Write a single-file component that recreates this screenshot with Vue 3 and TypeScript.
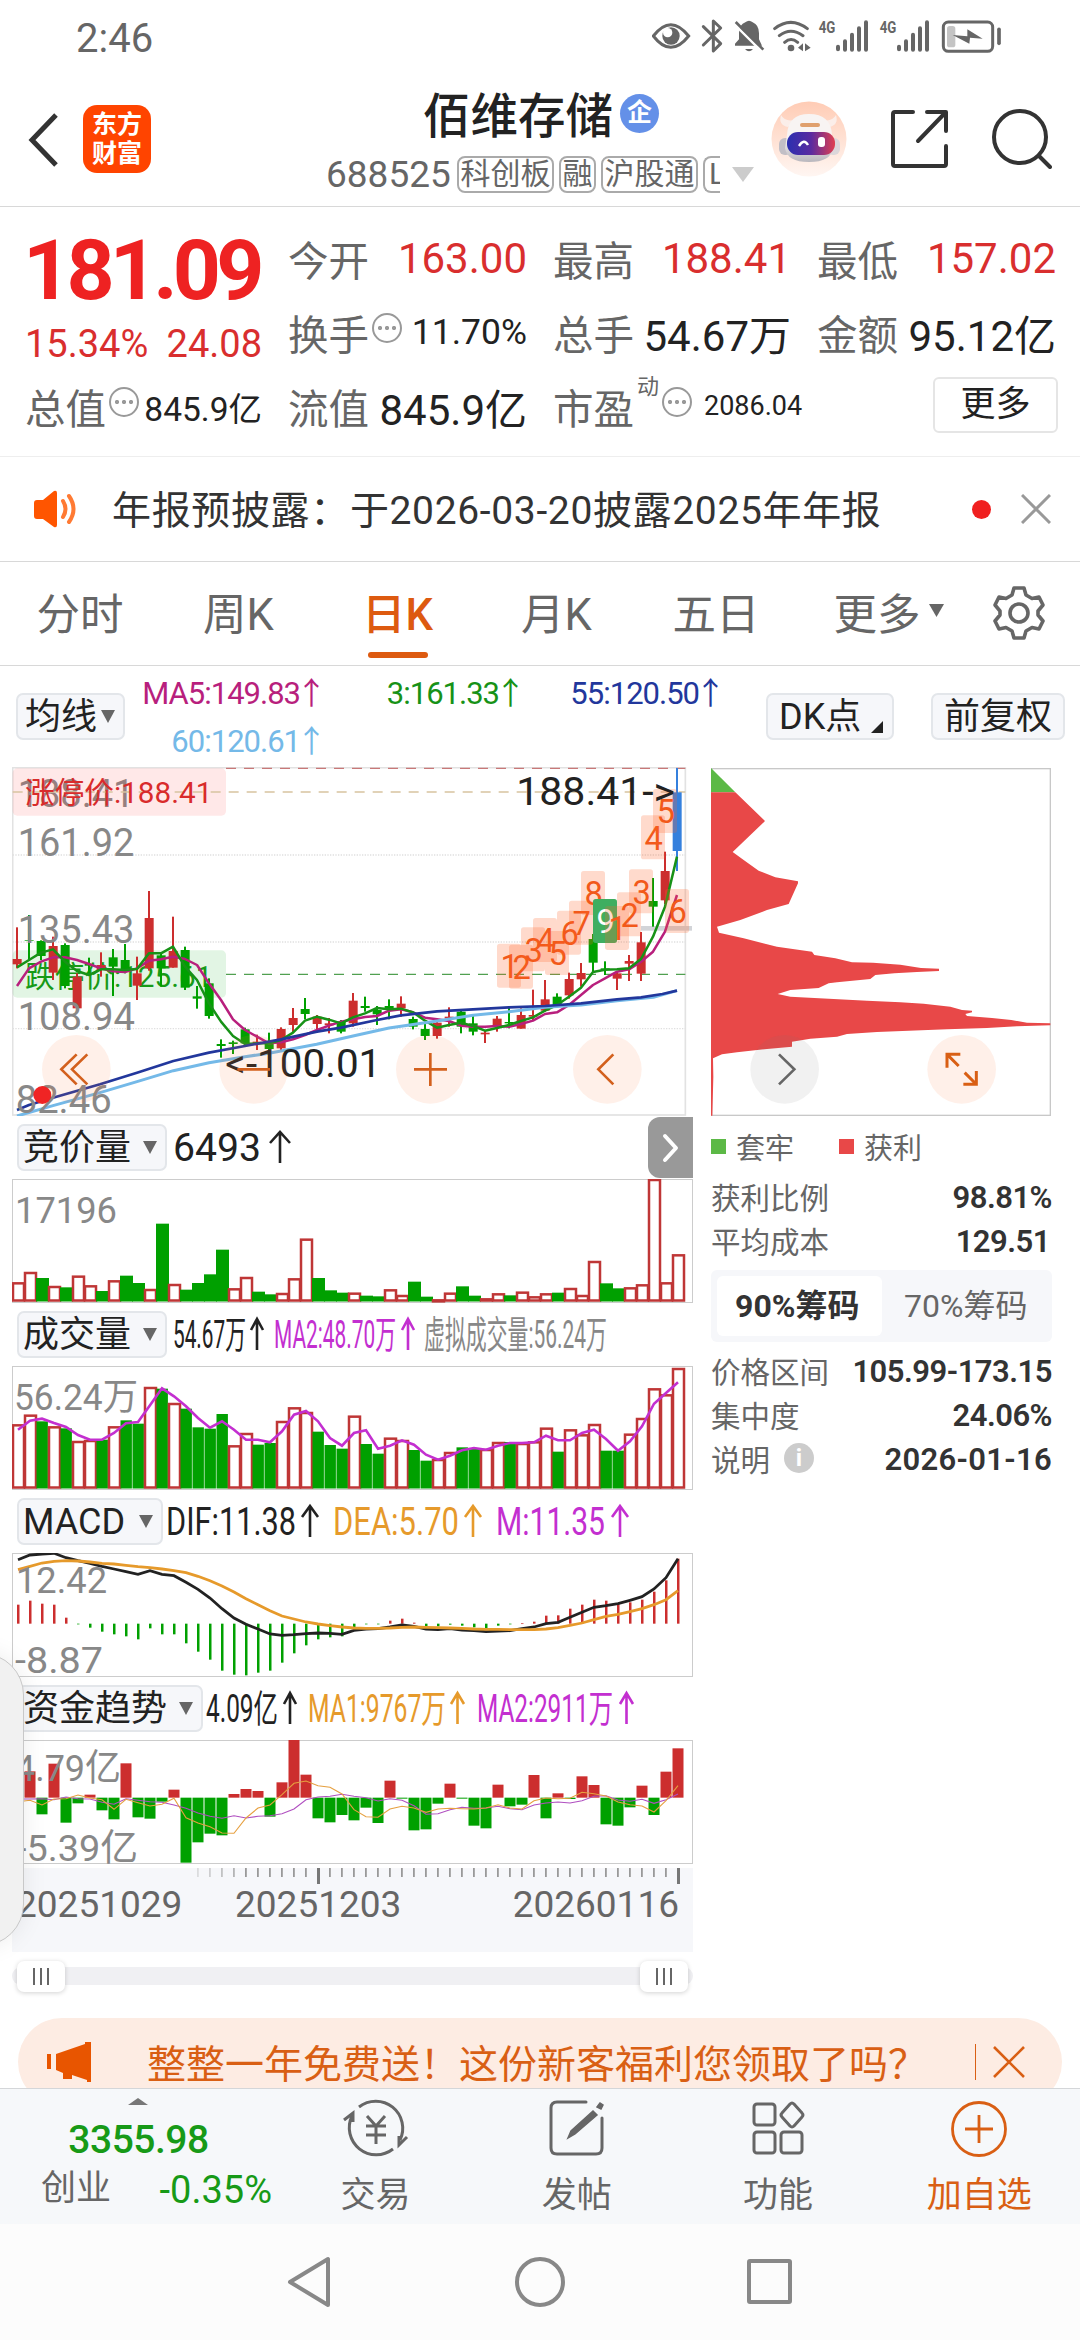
<script setup lang="ts">
import { computed, ref } from 'vue'

type Candle = [high: number, top: number, bottom: number, low: number, kind: string]

interface Reading {
    text: string
    x: number
    w: number
    color: string
    arrow?: number
    arrowWidth?: number
}

interface Panel {
    id: string
    name: string
    button: number
    start: number
    readings: Reading[]
}

const GREEN = '#00a000'
const RED = '#cc2e2e'

const tabs = ['分时', '周K', '日K', '月K', '五日']
const activeTab = ref('日K')
const chipRange = ref('90%筹码')

// Candles: high, body top, body bottom, low in chart units (3 per pixel)
const candles: Candle[] = [
    [502, 597, 613, 625, 'r'], [465, 541, 543, 603, 'g'], [541, 543, 588, 600, 'g'], [530, 558, 638, 660, 'r'],
    [550, 555, 678, 685, 'g'], [640, 650, 745, 748, 'r'], [593, 612, 617, 640, 'g'], [577, 615, 630, 650, 'r'],
    [567, 592, 620, 708, 'g'], [552, 600, 628, 640, 'g'], [590, 640, 677, 720, 'r'], [393, 474, 625, 632, 'r'],
    [580, 586, 625, 680, 'g'], [470, 573, 623, 623, 'r'], [560, 570, 683, 690, 'g'], [678, 709, 716, 746, 'g'],
    [655, 670, 768, 776, 'g'], [838, 852, 858, 893, 'g'], [842, 847, 852, 882, 'g'], [803, 808, 850, 853, 'g'],
    [824, 845, 850, 870, 'r'], [818, 845, 867, 872, 'g'], [802, 807, 865, 875, 'r'], [744, 774, 795, 818, 'r'],
    [714, 747, 762, 778, 'g'], [765, 770, 792, 818, 'r'], [774, 790, 796, 820, 'r'], [780, 785, 815, 820, 'g'],
    [699, 722, 790, 800, 'r'], [710, 738, 744, 755, 'g'], [738, 750, 763, 795, 'g'], [718, 738, 744, 778, 'g'],
    [709, 731, 745, 770, 'r'], [770, 777, 800, 808, 'g'], [790, 807, 828, 840, 'g'], [780, 788, 828, 836, 'r'],
    [742, 770, 776, 800, 'r'], [750, 755, 800, 820, 'g'], [763, 790, 815, 826, 'g'], [812, 818, 823, 849, 'r'],
    [768, 776, 800, 815, 'r'], [738, 786, 790, 805, 'g'], [745, 765, 806, 806, 'r'], [689, 765, 770, 780, 'r'],
    [660, 718, 752, 755, 'r'], [700, 710, 735, 742, 'g'], [638, 657, 706, 716, 'r'], [609, 639, 658, 680, 'r'],
    [522, 537, 608, 635, 'g'], [604, 625, 630, 645, 'g'], [635, 640, 656, 690, 'r'], [585, 603, 611, 663, 'r'],
    [516, 547, 641, 663, 'r'], [354, 423, 440, 500, 'g'], [275, 333, 421, 432, 'r'], [24, 97, 273, 333, 'b'],
]

const ma3 = [622, 600, 578, 568, 605, 633, 645, 628, 628, 630, 627, 580, 580, 560, 620, 660, 730, 785, 828, 852, 850, 850, 840, 818, 782, 770, 779, 790, 772, 760, 744, 748, 746, 757, 782, 803, 795, 788, 798, 812, 804, 795, 783, 772, 752, 735, 710, 683, 636, 629, 628, 625, 597, 530, 440, 290]
const ma5 = [678, 625, 605, 592, 592, 600, 612, 625, 634, 636, 625, 602, 598, 590, 597, 615, 670, 720, 778, 810, 830, 850, 847, 838, 825, 810, 797, 785, 778, 771, 768, 752, 748, 757, 773, 778, 783, 797, 800, 800, 798, 800, 792, 782, 762, 757, 735, 705, 675, 655, 635, 628, 605, 575, 515, 405]

const kx = (i: number) => 51 + i * 36
const kLine = (ys: number[]) => ys.map((y, i) => `${kx(i)},${y}`).join(' ')

// Sequence counter labels on top of the candles
const marks = [
    ['1', 1491, 551], ['2', 1527, 554], ['3', 1563, 502], ['4', 1599, 474], ['5', 1635, 513],
    ['6', 1671, 452], ['7', 1707, 422], ['8', 1743, 333], ['9', 1779, 417], ['1', 1815, 438],
    ['2', 1851, 397], ['3', 1887, 328], ['4', 1923, 166], ['5', 1959, 87], ['6', 1995, 387],
] as [string, number, number][]

// Bar tops per day (3 units per pixel) and direction per day
const auctionTops = [310, 279, 297, 321, 325, 290, 319, 336, 304, 290, 312, 330, 134, 315, 332, 312, 286, 212, 328, 294, 338, 346, 342, 298, 179, 297, 334, 341, 341, 350, 352, 331, 348, 308, 353, 361, 341, 322, 350, 358, 343, 349, 338, 352, 343, 341, 327, 348, 246, 313, 328, 325, 316, 0, 310, 226]
const auctionKinds = 'rrgrgrrgrggrgrggggrrggrrrgggrggrrggrrggrrgrrrgrrrggrrrrr'
const volumeTops = [175, 146, 166, 181, 187, 225, 222, 221, 181, 163, 173, 63, 68, 111, 128, 184, 188, 144, 238, 201, 236, 231, 165, 124, 138, 197, 237, 248, 149, 234, 263, 215, 222, 252, 284, 279, 258, 244, 246, 249, 228, 228, 231, 226, 185, 257, 190, 205, 174, 254, 254, 203, 156, 67, 85, 6]
const volumeKinds = 'rrgrgrrgrggrgrggggrrggrrrgggrggrrggrrggrrgrrrgrrrggrrrrr'
const volumeMa = [191, 164, 158, 171, 183, 207, 221, 221, 201, 172, 168, 118, 67, 91, 121, 156, 185, 166, 191, 221, 221, 229, 196, 146, 135, 166, 216, 239, 201, 193, 248, 239, 223, 236, 266, 281, 269, 253, 246, 251, 239, 231, 231, 229, 209, 223, 223, 201, 191, 219, 254, 226, 181, 113, 81, 49]

const macdBars = [345, 333, 342, 345, 384, 404, 414, 426, 434, 440, 449, 416, 434, 434, 461, 486, 510, 543, 555, 557, 549, 543, 519, 491, 467, 449, 443, 440, 415, 404, 403, 393, 387, 399, 410, 410, 405, 408, 413, 416, 408, 404, 401, 396, 378, 377, 357, 345, 330, 333, 343, 338, 330, 306, 272, 207]
const dif = [210, 196, 193, 191, 204, 213, 221, 230, 238, 246, 254, 243, 254, 258, 278, 299, 325, 357, 385, 404, 418, 433, 437, 435, 432, 430, 431, 434, 422, 418, 417, 412, 406, 410, 418, 420, 417, 421, 423, 426, 424, 423, 417, 412, 402, 398, 383, 368, 353, 348, 342, 332, 321, 298, 264, 207]
const dea = [240, 230, 220, 215, 213, 214, 217, 221, 223, 227, 231, 234, 238, 243, 249, 260, 273, 289, 307, 327, 345, 363, 379, 388, 397, 403, 408, 412, 415, 416, 416, 415, 413, 412, 413, 414, 415, 416, 418, 419, 419, 420, 420, 420, 418, 414, 407, 400, 390, 380, 374, 366, 357, 345, 330, 303]

const flowEnds = [330, 275, 404, 252, 429, 371, 345, 392, 419, 251, 413, 417, 366, 330, 549, 488, 462, 467, 343, 328, 334, 411, 308, 181, 285, 416, 428, 406, 422, 384, 430, 303, 357, 452, 449, 372, 312, 357, 438, 446, 315, 380, 375, 286, 416, 341, 358, 290, 316, 434, 438, 383, 318, 406, 276, 206]
const flowMa1 = [366, 362, 376, 358, 357, 346, 355, 360, 389, 359, 369, 379, 374, 356, 414, 430, 441, 460, 461, 415, 385, 376, 345, 311, 304, 318, 323, 343, 390, 411, 413, 388, 380, 385, 398, 388, 386, 387, 388, 385, 375, 385, 388, 363, 355, 357, 356, 338, 342, 349, 367, 375, 379, 397, 363, 318]
const flowMa2 = [358, 358, 357, 360, 352, 357, 358, 368, 374, 357, 362, 366, 368, 376, 386, 400, 410, 416, 408, 415, 410, 408, 402, 388, 360, 352, 350, 344, 350, 354, 364, 357, 362, 378, 404, 402, 390, 383, 386, 385, 380, 387, 390, 376, 370, 367, 370, 363, 350, 348, 361, 365, 359, 371, 360, 343]

const px = (i: number) => 6 + i * 12
const line = (ys: number[], base: number) =>
    ys.map((y, i) => `${px(i)},${((y - base) / 3).toFixed(1)}`).join(' ')

const bars = (tops: number[], kinds: string) =>
    tops.map((t, i) => ({ x: px(i), y: t / 3, h: 122.5 - t / 3, up: kinds[i] === 'r' }))

const auctionBars = computed(() => bars(auctionTops, auctionKinds))
const volumeBars = computed(() => bars(volumeTops, volumeKinds))

// Signed bars growing up or down from a zero line
const signed = (ends: number[], base: number, zero: number) =>
    ends.map((e, i) => ({
        x: px(i),
        y: (Math.min(e, zero) - base) / 3,
        h: Math.max(0.7, Math.abs(e - zero) / 3),
        fill: e < zero ? RED : GREEN,
    }))

const macdSticks = computed(() => signed(macdBars, 190, 402))
const flowBars = computed(() => signed(flowEnds, 181, 354))

const ticks = Array.from({ length: 41 }, (_, k) => k + 15)

const panels: Panel[] = [
    {
        id: 'auction', name: '竞价量', button: 150, start: 167,
        readings: [{ text: '6493', x: 173, w: 88, color: '#222', arrow: 270, arrowWidth: 20 }],
    },
    {
        id: 'volume', name: '成交量', button: 150, start: 167,
        readings: [
            { text: '54.67万', x: 173, w: 73, color: '#222', arrow: 251, arrowWidth: 12 },
            { text: 'MA2:48.70万', x: 274, w: 122, color: '#c32fd0', arrow: 402, arrowWidth: 12 },
            { text: '虚拟成交量:56.24万', x: 424, w: 183, color: '#888' },
        ],
    },
    {
        id: 'macd', name: 'MACD', button: 146, start: 163,
        readings: [
            { text: 'DIF:11.38', x: 166, w: 130, color: '#222', arrow: 302, arrowWidth: 16 },
            { text: 'DEA:5.70', x: 333, w: 126, color: '#e69a2b', arrow: 465, arrowWidth: 16 },
            { text: 'M:11.35', x: 496, w: 109, color: '#c32fd0', arrow: 612, arrowWidth: 16 },
        ],
    },
    {
        id: 'flow', name: '资金趋势', button: 186, start: 203,
        readings: [
            { text: '4.09亿', x: 206, w: 72, color: '#222', arrow: 284, arrowWidth: 12 },
            { text: 'MA1:9767万', x: 308, w: 138, color: '#e69a2b', arrow: 451, arrowWidth: 13 },
            { text: 'MA2:2911万', x: 477, w: 136, color: '#c32fd0', arrow: 620, arrowWidth: 13 },
        ],
    },
]
</script>

<template>
    <main class="screen">
        <div class="status">
            <span class="clock">2:46</span>
            <svg class="status-icons" width="350" height="36" viewBox="36 24 1050 108" fill="none" stroke="#666">
                <path d="M40 78Q92 10 146 78Q92 146 40 78Z" stroke-width="9" />
                <circle cx="93" cy="78" r="26" fill="#666" stroke="none" />
                <circle cx="83" cy="68" r="14" fill="#fff" stroke="none" />
                <path d="M190 50L242 101L220 123V33L242 54L190 105" stroke-width="9" stroke-linejoin="round" stroke-linecap="round" />
                <path d="M285 107V101L297 88V68Q298 44 316 37Q327 28 338 37Q357 45 357 70V88L366 107Z" fill="#666" stroke="none" />
                <path d="M281 40L367 126" stroke="#fff" stroke-width="8" />
                <path d="M287 36L370 119" stroke-width="8" />
                <path d="M315 117H339Q327 131 315 117Z" fill="#666" stroke="none" />
                <path d="M404 56Q452 18 502 56M418 77Q452 50 489 77M434 97Q453 80 473 97" stroke-width="9" stroke-linecap="round" />
                <circle cx="453" cy="114" r="10" fill="#666" stroke="none" />
                <path d="M489 100V124L474 113ZM495 100V124L512 113Z" fill="#666" stroke="none" />
                <g fill="#666" stroke="none" class="net">
                    <text x="536" y="70" textLength="50" lengthAdjust="spacingAndGlyphs">4G</text>
                    <text x="719" y="70" textLength="50" lengthAdjust="spacingAndGlyphs">4G</text>
                </g>
                <path d="M594 110V118M615 94V119M636 74V119M657 55V119M678 37V119M777 110V118M798 94V119M819 74V119M840 55V119M861 37V119" stroke-width="12" stroke-linecap="round" />
                <rect x="910" y="36" width="148" height="88" rx="15" stroke-width="9" />
                <rect x="921" y="48" width="25" height="64" rx="8" fill="#c4c4c4" stroke="none" />
                <path d="M938 75L982 79V58L1028 86L990 83L988 101Z" fill="#666" stroke="none" />
                <path d="M1077 58V100" stroke-width="11" stroke-linecap="round" />
            </svg>
        </div>

        <header class="top">
            <div class="top-left">
                <svg width="32" height="54" viewBox="0 0 32 54" fill="none" stroke="#333" stroke-width="5"><path d="M29 2L5 27L29 52" /></svg>
                <div class="logo"><span>东方</span><span>财富</span></div>
            </div>
            <div class="stock">
                <div class="stock-name">佰维存储<span class="corp">企</span></div>
                <div class="stock-code">
                    <span class="code">688525</span>
                    <span class="tag">科创板</span>
                    <span class="tag">融</span>
                    <span class="tag">沪股通</span>
                    <span class="tag cut">L</span>
                    <svg class="drop" width="22" height="15" viewBox="0 0 22 15"><path d="M0 0H22L11 15Z" fill="#ccc" /></svg>
                </div>
            </div>
            <div class="top-right">
                <svg width="76" height="76" viewBox="0 0 76 76">
                    <defs>
                        <linearGradient id="halo" x1="0" y1="0" x2="0" y2="1"><stop offset="0" stop-color="#ffccb5" /><stop offset="1" stop-color="#fff6f2" /></linearGradient>
                        <linearGradient id="visor" x1="0" y1="0" x2="1" y2="0"><stop offset="0" stop-color="#2b2fb0" /><stop offset=".5" stop-color="#5a2ba0" /><stop offset="1" stop-color="#e04050" /></linearGradient>
                        <linearGradient id="shell" x1="0" y1="0" x2="0" y2="1"><stop offset=".5" stop-color="#f8f4f3" /><stop offset="1" stop-color="#b9b7bd" /></linearGradient>
                    </defs>
                    <circle cx="38" cy="38" r="37.5" fill="url(#halo)" />
                    <path d="M17 26Q7 24 10 14Q14 21 23 19ZM58 26Q68 24 65 14Q61 21 52 19Z" fill="#fbeee9" />
                    <rect x="8" y="37" width="13" height="17" rx="6" fill="#c2bfc6" />
                    <rect x="56" y="37" width="13" height="17" rx="6" fill="#dcd7da" />
                    <path d="M16 34Q17 13 38 13Q60 13 61 34L62 47Q60 61 38 61Q16 61 14 47Z" fill="url(#shell)" />
                    <rect x="29" y="22" width="20" height="4" rx="2" fill="#e0a06d" />
                    <rect x="16" y="31" width="48" height="23" rx="11" fill="url(#visor)" />
                    <path d="M28 45Q33 37 37 44" fill="none" stroke="#fff" stroke-width="2.4" />
                    <rect x="47" y="36" width="7" height="10" rx="3" fill="#fff" />
                </svg>
                <svg width="60" height="60" viewBox="0 0 60 60" fill="none" stroke="#333" stroke-width="4" stroke-linecap="round" stroke-linejoin="round">
                    <path d="M23 3H5Q3 3 3 5V55Q3 57 5 57H54Q56 57 56 55V37M37 3H56V22M55 4L28 32" />
                </svg>
                <svg width="60" height="60" viewBox="0 0 60 60" fill="none" stroke="#333" stroke-width="4" stroke-linecap="round">
                    <circle cx="28" cy="28" r="26" /><path d="M47 47L58 58" />
                </svg>
            </div>
        </header>

        <section class="quote">
            <div class="col first">
                <div class="price">181.09</div>
                <div class="cell change"><span>15.34%</span><span>24.08</span></div>
                <div class="cell"><label>总值</label><i class="dots"></i><b class="mid">845.9亿</b></div>
            </div>
            <div class="col">
                <div class="cell"><label>今开</label><b class="red">163.00</b></div>
                <div class="cell"><label>换手</label><i class="dots"></i><b class="mid">11.70%</b></div>
                <div class="cell"><label>流值</label><b>845.9亿</b></div>
            </div>
            <div class="col">
                <div class="cell"><label>最高</label><b class="red">188.41</b></div>
                <div class="cell"><label>总手</label><b>54.67万</b></div>
                <div class="cell"><label>市盈</label><sup>动</sup><i class="dots"></i><b class="small">2086.04</b></div>
            </div>
            <div class="col">
                <div class="cell"><label>最低</label><b class="red">157.02</b></div>
                <div class="cell"><label>金额</label><b>95.12亿</b></div>
                <div class="cell"><button class="more">更多</button></div>
            </div>
        </section>

        <section class="notice">
            <svg width="46" height="38" viewBox="0 0 46 38">
                <path d="M4 10H10L21 1Q24 0 24 3V35Q24 38 21 37L10 29H4Q1 29 1 26V13Q1 10 4 10Z" fill="#ff5500" />
                <path d="M30 11Q35 19 30 27M36 6Q45 19 36 32" fill="none" stroke="#ff7a33" stroke-width="4" stroke-linecap="round" />
            </svg>
            <p>年报预披露：于2026-03-20披露2025年年报</p>
            <i class="dot"></i>
            <svg width="30" height="30" viewBox="0 0 30 30" stroke="#999" stroke-width="3"><path d="M1 1L29 29M29 1L1 29" /></svg>
        </section>

        <nav class="tabs">
            <a v-for="t in tabs" :key="t" :class="{ active: t === activeTab }" @click="activeTab = t">{{ t }}</a>
            <a class="tab-more">更多<svg width="15" height="13" viewBox="0 0 15 13"><path d="M0 0H15L7.5 13Z" fill="#666" /></svg></a>
            <svg class="gear" width="52" height="54" viewBox="0 0 52 54" fill="none" stroke="#666" stroke-width="3.6" stroke-linejoin="round">
                <path d="M21 2H31L33 9L39 12.5L46 11L50 19L45 25V29L50 35L46 43L39 41.5L33 45L31 52H21L19 45L13 41.5L6 43L2 35L7 29V25L2 19L6 11L13 12.5L19 9Z" />
                <circle cx="26" cy="27" r="9" />
            </svg>
        </nav>

        <section class="ma-bar">
            <button class="pill ma-btn">均线<svg width="14" height="13" viewBox="0 0 14 13"><path d="M0 0H14L7 13Z" fill="#666" /></svg></button>
            <div class="ma-values">
                <span class="c-ma5">MA5:149.83<u>↑</u></span>
                <span class="c-ma3">3:161.33<u>↑</u></span>
                <span class="c-ma55">55:120.50<u>↑</u></span>
                <span class="c-ma60">60:120.61<u>↑</u></span>
            </div>
            <button class="pill dk">DK点<svg width="12" height="12" viewBox="0 0 12 12"><path d="M12 0V12H0Z" fill="#222" /></svg></button>
            <button class="pill adj">前复权</button>
        </section>

        <div class="body">
            <div class="charts">
                <svg class="kline" width="681" height="349" viewBox="36 21 2043 1047">
                    <rect x="38" y="23" width="2018" height="1042" fill="none" stroke="#e2e2e2" stroke-width="5" />
                    <g class="price-scale">
                        <text x="53" y="140" textLength="350" lengthAdjust="spacingAndGlyphs">188.41</text>
                    </g>
                    <path d="M38 285H2056M38 546H2056M38 806H2056" stroke="#e0e0e0" stroke-width="4" stroke-dasharray="4 4" />
                    <rect x="38" y="25" width="640" height="142" rx="14" fill="#ff4040" fill-opacity=".12" />
                    <rect x="38" y="571" width="640" height="142" rx="14" fill="#20b030" fill-opacity=".13" />
                    <path d="M678 25H2056" stroke="#c87878" stroke-width="4" stroke-dasharray="30 24" />
                    <path d="M38 96H2056" stroke="#d8c4a0" stroke-width="5" stroke-dasharray="30 24" />
                    <path d="M678 643H2056" stroke="#50a050" stroke-width="4" stroke-dasharray="30 24" />
                    <text x="75" y="128" class="limit" fill="#d92b2b" textLength="562" lengthAdjust="spacingAndGlyphs">涨停价:188.41</text>
                    <text x="75" y="680" class="limit" fill="#179a17" textLength="562" lengthAdjust="spacingAndGlyphs">跌停价:125.61</text>
                    <rect x="1923" y="498" width="153" height="14" fill="#d2d4d8" />
                    <g v-for="(c, i) in candles" :key="i" :class="['candle', c[4]]">
                        <rect :x="kx(i) - 3" :y="c[0]" width="6" :height="c[3] - c[0]" />
                        <rect :x="kx(i) - 13" :y="c[1]" width="27" :height="c[2] - c[1]" />
                    </g>
                    <g class="price-scale">
                        <text x="53" y="289" textLength="350" lengthAdjust="spacingAndGlyphs">161.92</text>
                        <text x="53" y="549" textLength="350" lengthAdjust="spacingAndGlyphs">135.43</text>
                        <text x="53" y="811" textLength="352" lengthAdjust="spacingAndGlyphs">108.94</text>
                    </g>
                    <g fill="none" stroke-width="7.5" stroke-linejoin="round">
                        <polyline :points="kLine(ma5)" stroke="#b81f7d" />
                        <polyline :points="kLine(ma3)" stroke="#179217" />
                        <path d="M51 1068L159 1037L300 998L411 965L520 932L627 908L735 890L807 880L950 853L1059 828L1167 804L1311 783L1419 766L1527 755L1635 742L1743 735L1851 722L1960 712L2031 692" stroke="#74b9e8" stroke-width="9" />
                        <path d="M51 1050L87 1035L159 1013L300 973L411 938L520 903L627 878L735 858L843 838L951 815L1023 803L1131 780L1203 766L1311 754L1419 748L1527 742L1635 738L1743 730L1851 718L1923 712L1987 702L2031 692" stroke="#22379c" stroke-width="8" />
                    </g>
                    <text x="47" y="1058" class="grey" textLength="288" lengthAdjust="spacingAndGlyphs">82.46</text>
                    <circle cx="127" cy="1005" r="27" fill="#f02424" />
                    <g v-for="(m, i) in marks" :key="'m' + i">
                        <rect :x="m[1]" :y="m[2]" width="72" height="132" rx="8" :class="m[0] === '9' ? 'mark-nine' : 'mark-box'" />
                        <text :x="m[1] + 38" :y="m[2] + 103" text-anchor="middle" :class="['mark', { nine: m[0] === '9' }]">{{ m[0] }}</text>
                    </g>
                    <text x="1549" y="135" class="extreme" textLength="476" lengthAdjust="spacingAndGlyphs">188.41-&gt;</text>
                    <text x="676" y="950" class="extreme" textLength="468" lengthAdjust="spacingAndGlyphs">&lt;-100.01</text>
                    <g fill="#ff7a33" fill-opacity=".11">
                        <circle cx="229" cy="928" r="103" /><circle cx="761" cy="928" r="103" />
                        <circle cx="1291" cy="928" r="103" /><circle cx="1822" cy="928" r="103" />
                    </g>
                    <path d="M230 883L184 928L230 973M262 883L216 928L262 973M712 928H810M1242 928H1341M1291 879V978M1840 883L1795 928L1840 973" fill="none" stroke="#d3601d" stroke-width="8" />
                </svg>

                <template v-for="p in panels" :key="p.id">
                    <div class="panel-head">
                        <button class="pill picker" :style="{ width: p.button + 'px' }">
                            {{ p.name }}<svg width="14" height="13" viewBox="0 0 14 13"><path d="M0 0H14L7 13Z" fill="#666" /></svg>
                        </button>
                        <svg class="readings" :width="693 - p.start" height="55" :viewBox="`${p.start} 8 ${693 - p.start} 55`">
                            <g v-for="r in p.readings" :key="r.text" :fill="r.color">
                                <text :x="r.x" y="45" :textLength="r.w" lengthAdjust="spacingAndGlyphs">{{ r.text }}</text>
                                <path v-if="r.arrow" :d="`M${r.arrow} 27L${r.arrow + r.arrowWidth! / 2} 16L${r.arrow + r.arrowWidth!} 27M${r.arrow + r.arrowWidth! / 2} 16V47`" fill="none" :stroke="r.color" stroke-width="2.6" />
                            </g>
                        </svg>
                        <div v-if="p.id === 'auction'" class="side-toggle">
                            <svg width="18" height="30" viewBox="0 0 18 30" fill="none" stroke="#fff" stroke-width="4" stroke-linecap="round" stroke-linejoin="round"><path d="M3 3L14 15L3 27" /></svg>
                        </div>
                    </div>
                    <svg class="panel" width="681" height="124" viewBox="0 0 681 124">
                        <rect x=".5" y=".5" width="680" height="123" fill="none" stroke="#ccc" />
                        <template v-if="p.id === 'auction'">
                            <template v-for="(b, i) in auctionBars" :key="i">
                                <rect v-if="b.up" :x="b.x - 5" :y="b.y + 1" width="11" :height="Math.max(1, b.h - 2)" fill="#fff" stroke="#bf3636" stroke-width="2.5" />
                                <rect v-else :x="b.x - 6" :y="b.y" width="13" :height="b.h" fill="#00a000" />
                            </template>
                            <text x="3" y="44" textLength="102" lengthAdjust="spacingAndGlyphs">17196</text>
                        </template>
                        <template v-else-if="p.id === 'volume'">
                            <template v-for="(b, i) in volumeBars" :key="i">
                                <rect v-if="b.up" :x="b.x - 5" :y="b.y + 1" width="11" :height="b.h - 2" fill="#fff" stroke="#bf3636" stroke-width="2.5" />
                                <rect v-else :x="b.x - 5.5" :y="b.y" width="11.4" :height="b.h" fill="#00a000" />
                            </template>
                            <polyline :points="line(volumeMa, 0)" fill="none" stroke="#c32fd0" stroke-width="2.6" />
                            <text x="2" y="44" textLength="124" lengthAdjust="spacingAndGlyphs">56.24万</text>
                        </template>
                        <template v-else-if="p.id === 'macd'">
                            <rect v-for="(b, i) in macdSticks" :key="i" :x="b.x - 1" :y="b.y" width="2.5" :height="b.h" :fill="b.fill" />
                            <polyline :points="line(dif, 190)" fill="none" stroke="#222" stroke-width="2.8" />
                            <polyline :points="line(dea, 190)" fill="none" stroke="#e69a2b" stroke-width="2.8" />
                            <text x="4" y="40" textLength="91" lengthAdjust="spacingAndGlyphs">12.42</text>
                            <text x="3" y="120" textLength="88" lengthAdjust="spacingAndGlyphs">-8.87</text>
                        </template>
                        <template v-else>
                            <rect v-for="(b, i) in flowBars" :key="i" :x="b.x - 5.5" :y="b.y" width="11" :height="b.h" :fill="b.fill" />
                            <polyline :points="line(flowMa2, 181)" fill="none" stroke="#b04fc0" stroke-width="1.1" />
                            <polyline :points="line(flowMa1, 181)" fill="none" stroke="#e6a040" stroke-width="1.1" />
                            <text x="3" y="41" textLength="106" lengthAdjust="spacingAndGlyphs">4.79亿</text>
                            <text x="4" y="121" textLength="122" lengthAdjust="spacingAndGlyphs">-5.39亿</text>
                        </template>
                    </svg>
                </template>

                <div class="axis">
                    <svg width="681" height="16" viewBox="0 0 681 16">
                        <rect v-for="i in ticks" :key="i" :x="px(i) - 1" y="0" :width="i % 30 === 25 ? 3 : 1.8" :height="i % 30 === 25 ? 16 : 9" :fill="i % 30 === 25 ? '#777' : '#999'" :opacity="i < 19 ? (i - 13) / 7 : 1" />
                    </svg>
                    <div class="dates"><span>20251029</span><span>20251203</span><span>20260116</span></div>
                </div>
                <div class="slider">
                    <i class="grip"></i><i class="grip"></i>
                </div>
            </div>

            <aside class="chips">
                <svg width="341" height="349" viewBox="62 24 1023 1047">
                    <rect x="64" y="26" width="1016" height="1040" fill="#fff" stroke="#c8c8c8" stroke-width="4" />
                    <path d="M62 24L135 97H62Z" fill="#5cb946" />
                    <path d="M62 97L135 97L224 183L127 276L160 300L205 332L255 352L323 364L323 370L295 432L230 450L150 480L80 500L86 518L160 535L260 560L365 575L372 585L435 595L485 607L548 608L630 614L692 624L746 626L746 633L680 636L612 640L555 645L540 657L440 667L415 670L385 684L300 690L262 702L300 710L430 717L530 722L630 727L700 731L780 740L815 750L845 752L845 757L825 762L830 768L905 774L963 780L1010 788L1080 790L1080 796L980 799L890 804L770 808L560 816L470 822L440 830L360 836L305 845L305 860L230 867L140 877L95 883L68 895L69 950L66 1067L62 1067Z" fill="#e84848" />
                    <circle cx="283" cy="928" r="103" fill="#777" fill-opacity=".1" />
                    <circle cx="814" cy="928" r="103" fill="#ff7a33" fill-opacity=".11" />
                    <path d="M266 883L312 928L266 973" fill="none" stroke="#666" stroke-width="8" />
                    <path d="M770 923V883H810M771 884L805 918M858 933V973H819M857 972L823 938" fill="none" stroke="#d95f14" stroke-width="9" />
                </svg>
                <div class="legend"><i class="lg"></i><span>套牢</span><i class="lr"></i><span>获利</span></div>
                <dl>
                    <div><dt>获利比例</dt><dd>98.81%</dd></div>
                    <div><dt>平均成本</dt><dd class="inset">129.51</dd></div>
                </dl>
                <div class="toggle">
                    <button v-for="r in ['90%筹码', '70%筹码']" :key="r" :class="{ on: chipRange === r }" @click="chipRange = r">{{ r }}</button>
                </div>
                <dl>
                    <div><dt>价格区间</dt><dd>105.99-173.15</dd></div>
                    <div><dt>集中度</dt><dd>24.06%</dd></div>
                    <div><dt>说明<i class="info">i</i></dt><dd class="date">2026-01-16</dd></div>
                </dl>
            </aside>
        </div>

        <div class="edge-handle"></div>

        <div class="promo">
            <svg width="46" height="40" viewBox="0 0 46 40" fill="#e85500"><path d="M0 12H4V27H0ZM9 12L38 2V0H44V40H40V38L25 33V37H16V31L9 28Z" /></svg>
            <p>整整一年免费送！这份新客福利您领取了吗？</p>
            <i></i>
            <svg width="32" height="32" viewBox="0 0 32 32" stroke="#d95f14" stroke-width="2.6"><path d="M1 1L31 31M31 1L1 31" /></svg>
        </div>

        <footer class="actions">
            <div class="index">
                <svg width="20" height="7" viewBox="0 0 20 7"><path d="M0 7L10 0L20 7Z" fill="#777" /></svg>
                <strong>3355.98</strong>
                <div><span>创业</span><em>-0.35%</em></div>
            </div>
            <div class="action">
                <svg width="66" height="60" viewBox="0 0 66 60" fill="none" stroke="#666" stroke-width="3">
                    <path d="M16 9A27 27 0 0 1 57 42M64 39L56 47V38" /><path d="M50 51A27 27 0 0 1 9 18M1 22L10 15V24" />
                    <path d="M24 18L33 28L42 18M33 28V46M23 28H43M23 37H43" />
                </svg>
                <span>交易</span>
            </div>
            <div class="action">
                <svg width="58" height="60" viewBox="0 0 58 60" fill="none" stroke="#666" stroke-width="3" stroke-linecap="round">
                    <path d="M38 4H9Q3 4 3 10V50Q3 56 9 56H48Q54 56 54 50V20" />
                    <path d="M45 13L49 17L27 36L20 40L23 33ZM49 9L52 5L55 7L53 11Z" fill="#666" stroke-width="1.5" />
                </svg>
                <span>发帖</span>
            </div>
            <div class="action">
                <svg width="54" height="60" viewBox="0 0 54 60" fill="none" stroke="#666" stroke-width="3">
                    <rect x="3" y="6" width="21" height="21" rx="3" /><rect x="3" y="34" width="21" height="21" rx="3" /><rect x="30" y="34" width="21" height="21" rx="3" />
                    <path d="M39 6Q41 4 43 6L51 15Q53 17 51 19L43 28Q41 30 39 28L31 19Q29 17 31 15Z" />
                </svg>
                <span>功能</span>
            </div>
            <div class="action add">
                <svg width="58" height="60" viewBox="0 0 58 60" fill="none" stroke="#d95f14" stroke-width="2.8"><circle cx="29" cy="31" r="26.5" /><path d="M15 31H43M29 17V45" /></svg>
                <span>加自选</span>
            </div>
        </footer>

        <div class="sysnav">
            <svg width="46" height="52" viewBox="0 0 46 52" fill="none" stroke="#888" stroke-width="4" stroke-linejoin="round"><path d="M42 3V49L4 26Z" /></svg>
            <svg width="52" height="52" viewBox="0 0 52 52" fill="none" stroke="#888" stroke-width="4"><circle cx="26" cy="26" r="23" /></svg>
            <svg width="46" height="46" viewBox="0 0 46 46" fill="none" stroke="#888" stroke-width="4"><rect x="2" y="2" width="41" height="41" rx="1" /></svg>
        </div>
    </main>
</template>

<style>
body {
    background: #fff;
}
</style>

<style scoped>
.screen {
    position: relative;
    display: flex;
    flex-direction: column;
    width: 1080px;
    height: 2340px;
    overflow: hidden;
    background: #fff;
    color: #222;
    font-family: Roboto, "Noto Sans CJK SC", sans-serif;
}
.screen * {
    box-sizing: border-box;
}
svg {
    display: block;
    flex: none;
}
button {
    font: inherit;
    color: inherit;
    padding: 0;
}
p {
    margin: 0;
}

.status {
    display: flex;
    justify-content: space-between;
    height: 72px;
    padding: 18px 78px 0 76px;
}
.clock {
    font-size: 40px;
    line-height: 42px;
    color: #666;
}
.net {
    font-size: 50px;
    font-weight: 700;
}

.top {
    display: grid;
    grid-template-columns: 326px 426px 1fr;
    height: 135px;
    border-bottom: 1.5px solid #d8d8d8;
}
.top-left {
    display: flex;
    align-items: flex-start;
    gap: 24px;
    padding: 41px 0 0 27px;
}
.logo {
    display: flex;
    flex-direction: column;
    align-items: center;
    justify-content: center;
    width: 68px;
    height: 68px;
    margin-top: -8px;
    border-radius: 14px;
    background: #ff4400;
    color: #fff;
    font-size: 25px;
    font-weight: 700;
    line-height: 29px;
}
.stock-name {
    display: flex;
    align-items: center;
    height: 58px;
    margin-top: 11px;
    padding-left: 97px;
    font-size: 47.5px;
    font-weight: 500;
}
.corp {
    width: 39px;
    height: 39px;
    margin: 3px 0 0 7px;
    border-radius: 50%;
    background: #6490e8;
    color: #fff;
    font-size: 25px;
    font-weight: 700;
    line-height: 38px;
    text-align: center;
}
.stock-code {
    display: flex;
    align-items: center;
    height: 44px;
    margin-top: 11px;
    color: #666;
    white-space: nowrap;
}
.code {
    flex: none;
    width: 131px;
    font-size: 37px;
}
.tag {
    flex: none;
    height: 37px;
    margin-right: 5px;
    padding: 0 1.5px;
    border: 2px solid #aaa;
    border-radius: 8px;
    font-size: 30px;
    line-height: 31px;
}
.tag.cut {
    width: 17px;
    margin-right: 12px;
    padding-left: 4px;
    overflow: hidden;
    border-right: 0;
    border-radius: 8px 0 0 8px;
}
.top-right {
    display: flex;
    align-items: center;
    justify-content: space-between;
    height: 76px;
    margin-top: 29px;
    padding: 0 28px 0 19px;
}

.quote {
    display: grid;
    grid-template-columns: 237px 239px 238px 239px;
    column-gap: 26px;
    height: 249px;
    padding: 14px 24px 0 25px;
}
.cell {
    display: flex;
    align-items: center;
    height: 74px;
    white-space: nowrap;
}
.cell label {
    font-size: 40.5px;
    color: #666;
}
.cell b {
    margin-left: auto;
    font-size: 42px;
    font-weight: 400;
}
.cell b.mid {
    font-size: 35.5px;
}
.first .cell b.mid {
    font-size: 33.5px;
}
.cell b.small {
    margin-left: 12px;
    font-size: 27px;
}
.cell b.red,
.change {
    color: #d92e2e;
}
.change {
    justify-content: space-between;
    padding-top: 24px;
    font-size: 38px;
}
.price {
    display: flex;
    align-items: center;
    height: 74px;
    padding-top: 24px;
    color: #ee2222;
    font-size: 84px;
    font-weight: 700;
    letter-spacing: -4.8px;
    text-indent: -2px;
}
.dots {
    flex: none;
    width: 30px;
    height: 30px;
    margin: -8px 0 0 3px;
    border: 2.5px solid #999;
    border-radius: 50%;
    background:
        radial-gradient(circle, #999 1.8px, transparent 2.4px) -7px 0 no-repeat,
        radial-gradient(circle, #999 1.8px, transparent 2.4px) 0 0 no-repeat,
        radial-gradient(circle, #999 1.8px, transparent 2.4px) 7px 0 no-repeat;
}
.cell sup {
    align-self: flex-start;
    margin: 0 0 0 3px;
    color: #666;
    font-size: 22px;
    line-height: 36px;
}
.more {
    width: 125px;
    height: 56px;
    margin: -2px -2px 0 auto;
    border: 2px solid #e5e5e5;
    border-radius: 6px;
    background: #fff;
    font-size: 35px;
    line-height: 50px;
}

.notice {
    display: flex;
    align-items: center;
    height: 106px;
    padding: 0 29px 0 33px;
    border-top: 1.5px solid #eee;
    border-bottom: 1.5px solid #d8d8d8;
}
.notice p {
    flex: 1;
    margin: -5px 0 0 33px;
    font-size: 39px;
    letter-spacing: 0.65px;
    color: #333;
    white-space: nowrap;
}
.dot {
    width: 19px;
    height: 19px;
    margin-right: 30px;
    border-radius: 50%;
    background: #f02020;
}

.tabs {
    display: grid;
    grid-template-columns: 160px 157px 161px 157px 162px 183px 1fr;
    height: 104px;
    border-bottom: 1.5px solid #d8d8d8;
}
.tabs a {
    position: relative;
    display: flex;
    align-items: center;
    justify-content: center;
    padding-bottom: 4px;
    color: #666;
    font-size: 43.5px;
}
.tabs a.active {
    color: #dd5a10;
    font-weight: 500;
}
.tabs a.active::after {
    content: "";
    position: absolute;
    left: 51px;
    bottom: 7px;
    width: 60px;
    height: 6px;
    border-radius: 3px;
    background: #dd5a10;
}
.tab-more svg {
    margin: -2px 0 0 8px;
}
.gear {
    margin: 24px 0 0 13px;
}

.pill {
    display: flex;
    align-items: center;
    height: 47px;
    border: 2px solid #e3e6ea;
    border-radius: 7px;
    background: #f6f7fa;
    font-size: 36px;
    line-height: 42px;
    white-space: nowrap;
}
.ma-bar {
    display: flex;
    align-items: flex-start;
    height: 101px;
    padding: 0 15px 0 16px;
}
.ma-bar .pill {
    margin-top: 27px;
}
.ma-btn {
    width: 109px;
    padding-left: 7px;
}
.ma-btn svg {
    margin-left: 4px;
}
.ma-values {
    display: grid;
    grid-template-columns: 196px 199px 200px;
    width: 641px;
    padding-top: 4px;
    font-size: 31px;
    letter-spacing: -1px;
    line-height: 48px;
    text-align: right;
}
.ma-values span {
    white-space: nowrap;
}
.ma-values u {
    display: inline-block;
    width: 21px;
    font-family: "Noto Sans CJK SC", sans-serif;
    line-height: 40px;
    text-decoration: none;
    text-indent: -4px;
}
.c-ma5 { color: #b81f7d; }
.c-ma3 { color: #179217; }
.c-ma55 { color: #22379c; }
.c-ma60 { color: #74b9e8; }
.dk {
    width: 128px;
    padding-left: 11px;
}
.dk svg {
    margin: 20px 0 0 10px;
}
.adj {
    margin-left: auto;
    width: 134px;
    justify-content: center;
}

.body {
    display: flex;
    height: 1251px;
    padding-left: 12px;
}
.charts {
    width: 681px;
}
.price-scale,
.grey {
    fill: #888;
    font-size: 118px;
}
.limit {
    font-size: 90px;
}
.extreme {
    fill: #222;
    font-size: 118px;
}
.candle.r { fill: #cc2e2e; }
.candle.g { fill: #00a000; }
.candle.b { fill: #3580dd; }
.mark {
    fill: #f2591a;
    font-size: 98px;
}
.mark.nine {
    fill: #fff;
}
.mark-box {
    fill: #ff6428;
    fill-opacity: 0.24;
}
.mark-nine {
    fill: #3fae60;
}
.panel-head {
    position: relative;
    display: flex;
    height: 63px;
    padding: 8px 0 0 5px;
}
.picker {
    justify-content: space-between;
    padding: 0 8px 0 4px;
}
.readings text {
    font-size: 38px;
}
.side-toggle {
    position: absolute;
    right: 0;
    top: 1px;
    display: flex;
    align-items: center;
    justify-content: center;
    width: 45px;
    height: 61px;
    border-radius: 12px 0 0 12px;
    background: #999;
}
.panel text {
    fill: #888;
    font-size: 37px;
}
.axis {
    height: 84px;
    margin-top: 4px;
    background: #f6f7fa;
}
.dates {
    display: grid;
    grid-template-columns: 219px 1fr auto;
    padding: 0 14px 0 4px;
    color: #666;
    font-size: 37px;
    line-height: 42px;
}
.slider {
    display: flex;
    justify-content: space-between;
    align-items: center;
    height: 18px;
    margin-top: 15px;
    padding: 0 5px;
    border-radius: 9px;
    background: #f0f0f3;
}
.grip {
    width: 48px;
    height: 31px;
    border-radius: 7px;
    background: linear-gradient(90deg, #666 2px, transparent 2px 7px, #666 7px 9px, transparent 9px 14px, #666 14px 16px) 16px 7px / 16px 17px no-repeat #fff;
    box-shadow: 0 1px 5px rgba(0, 0, 0, 0.18);
}

.chips {
    width: 341px;
    margin: 1px 0 0 18px;
    color: #666;
}
.legend {
    display: flex;
    align-items: center;
    height: 58px;
    font-size: 29px;
}
.legend i {
    width: 15px;
    height: 15px;
    margin-right: 10px;
}
.lg { background: #5cb946; }
.legend .lr {
    margin-left: 45px;
    background: #e84848;
}
dl {
    margin: 0;
}
dl div {
    display: flex;
    justify-content: space-between;
    align-items: center;
    height: 44px;
}
dt {
    display: flex;
    align-items: center;
    margin-top: -2px;
    font-size: 29.5px;
}
dd {
    margin: 0;
    color: #333;
    font-size: 31px;
    font-weight: 600;
    letter-spacing: -0.5px;
}
.inset {
    padding-right: 2px;
}
.date {
    letter-spacing: 0.3px;
}
.toggle {
    display: flex;
    height: 72px;
    margin: 7px 0;
    padding: 6px;
    border-radius: 6px;
    background: #f6f7fa;
}
.toggle button {
    flex: 1;
    padding-left: 4px;
    border: 0;
    border-radius: 6px;
    background: none;
    font-size: 32px;
    line-height: 58px;
}
.toggle .on {
    padding: 0 4px 0 0;
    background: #fff;
    color: #333;
    font-weight: 700;
}
.info {
    width: 30px;
    height: 30px;
    margin-left: 14px;
    border-radius: 50%;
    background: #ccc;
    color: #fff;
    font-size: 24px;
    font-style: normal;
    font-weight: 700;
    line-height: 30px;
    text-align: center;
}

.edge-handle {
    position: absolute;
    left: -60px;
    top: 1653px;
    width: 84px;
    height: 293px;
    border: 1.5px solid #c8c8c8;
    border-radius: 42px;
    background: #f1f1f1;
    box-shadow: 0 0 24px rgba(0, 0, 0, 0.08);
}

.promo {
    display: flex;
    align-items: center;
    flex: none;
    height: 88px;
    margin: 0 18px -18px;
    padding: 0 37px 0 29px;
    border-radius: 44px;
    background: #fdece3;
    color: #d95f14;
}
.promo p {
    flex: 1;
    margin: -3px 0 0 54px;
    font-size: 39px;
    white-space: nowrap;
}
.promo i {
    width: 1.5px;
    height: 36px;
    margin-right: 17px;
    background: #d95f14;
}

.actions {
    position: relative;
    display: grid;
    grid-template-columns: 275px repeat(4, 1fr);
    flex: none;
    height: 136px;
    border-top: 1.5px solid #d4d6d9;
    background: #f6f8fa;
}
.index {
    padding-top: 9px;
    color: #179a17;
    font-size: 38px;
}
.index > svg {
    margin-left: 128px;
}
.index strong {
    display: block;
    width: 277px;
    margin-top: 9px;
    text-align: center;
    font-size: 39px;
    font-weight: 500;
    letter-spacing: -0.5px;
    line-height: 52px;
}
.index div {
    display: flex;
    align-items: center;
    height: 50px;
    margin-top: -1px;
    padding: 0 3px 0 41px;
    justify-content: space-between;
    line-height: 44px;
}
.index span {
    margin-top: -2px;
    color: #666;
    font-size: 35px;
}
.index em {
    font-style: normal;
}
.action {
    display: flex;
    flex-direction: column;
    align-items: center;
    padding-top: 9px;
    color: #666;
    font-size: 35px;
    line-height: 40px;
}
.action span {
    margin-top: 18px;
}
.action.add {
    color: #d95f14;
}

.sysnav {
    display: flex;
    align-items: center;
    justify-content: space-between;
    flex: none;
    height: 116px;
    padding: 0 287px 0 286px;
    background: #fcfcfc;
}
</style>
